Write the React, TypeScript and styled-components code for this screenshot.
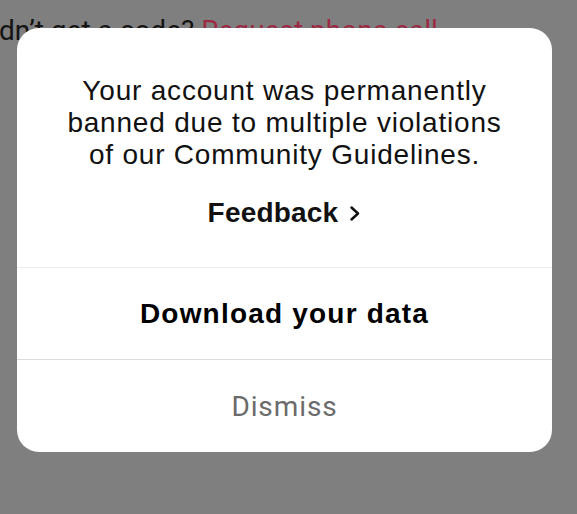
import React from 'react';
import styled, { createGlobalStyle } from 'styled-components';

const GlobalStyle = createGlobalStyle`
  html, body {
    margin: 0;
    padding: 0;
    background: #7f7f7f;
    overflow: hidden;
  }
`;

const Screen = styled.div`
  position: relative;
  width: 577px;
  height: 514px;
  background: #7f7f7f;
  overflow: hidden;
`;

const BehindText = styled.div`
  padding-top: 14px;
  margin-left: -1px;
  font-family: 'Roboto', 'Liberation Sans', sans-serif;
  font-size: 28px;
  line-height: 33px;
  color: #141414;
  white-space: nowrap;
`;

const BehindLink = styled.span`
  color: #9d2a44;
`;

const Modal = styled.div`
  position: absolute;
  top: 28px;
  left: 17px;
  width: 535px;
  height: 424px;
  background: #ffffff;
  border-radius: 22px;
  display: flex;
  flex-direction: column;
  overflow: hidden;
`;

const Message = styled.div`
  height: 240px;
  box-sizing: border-box;
  padding-top: 47px;
  display: flex;
  flex-direction: column;
  align-items: center;
  border-bottom: 1px solid #efefef;
`;

const Body = styled.p`
  margin: 0;
  text-align: center;
  font-family: 'Liberation Sans', 'Helvetica', sans-serif;
  font-size: 28px;
  line-height: 32px;
  letter-spacing: 0.8px;
  color: #111111;
`;

const FeedbackLink = styled.div`
  margin-top: 26px;
  display: flex;
  align-items: center;
  gap: 11px;
  font-family: 'Liberation Sans', 'Helvetica', sans-serif;
  font-weight: 700;
  font-size: 28px;
  line-height: 32px;
  letter-spacing: 0.2px;
  color: #111111;
`;

const Action = styled.div<{ $muted?: boolean; $divider?: boolean }>`
  height: 92px;
  display: flex;
  align-items: center;
  justify-content: center;
  box-sizing: border-box;
  border-bottom: ${(p) => (p.$divider ? '1px solid #dbdbdb' : 'none')};
  font-family: ${(p) => (p.$muted ? "'Roboto', sans-serif" : "'Liberation Sans', sans-serif")};
  font-weight: ${(p) => (p.$muted ? 400 : 700)};
  font-size: 28px;
  letter-spacing: ${(p) => (p.$muted ? '0.9px' : '1.2px')};
  color: ${(p) => (p.$muted ? '#6b6b6b' : '#000000')};
`;

const Chevron = () => (
  <svg width="12" height="17" viewBox="0 0 12 17" fill="none">
    <path d="M2.5 2.5l6.5 6-6.5 6" stroke="#111" strokeWidth="2.5" strokeLinecap="round" strokeLinejoin="round" />
  </svg>
);

const App = () => {
  return (
    <Screen>
      <GlobalStyle />
      <BehindText>
        dn’t get a code? <BehindLink>Request phone call</BehindLink>
      </BehindText>
      <Modal>
        <Message>
          <Body>
            Your account was permanently
            <br />
            banned due to multiple violations
            <br />
            of our Community Guidelines.
          </Body>
          <FeedbackLink>
            Feedback
            <Chevron />
          </FeedbackLink>
        </Message>
        <Action $divider>Download your data</Action>
        <Action $muted>Dismiss</Action>
      </Modal>
    </Screen>
  );
};

export default App;
